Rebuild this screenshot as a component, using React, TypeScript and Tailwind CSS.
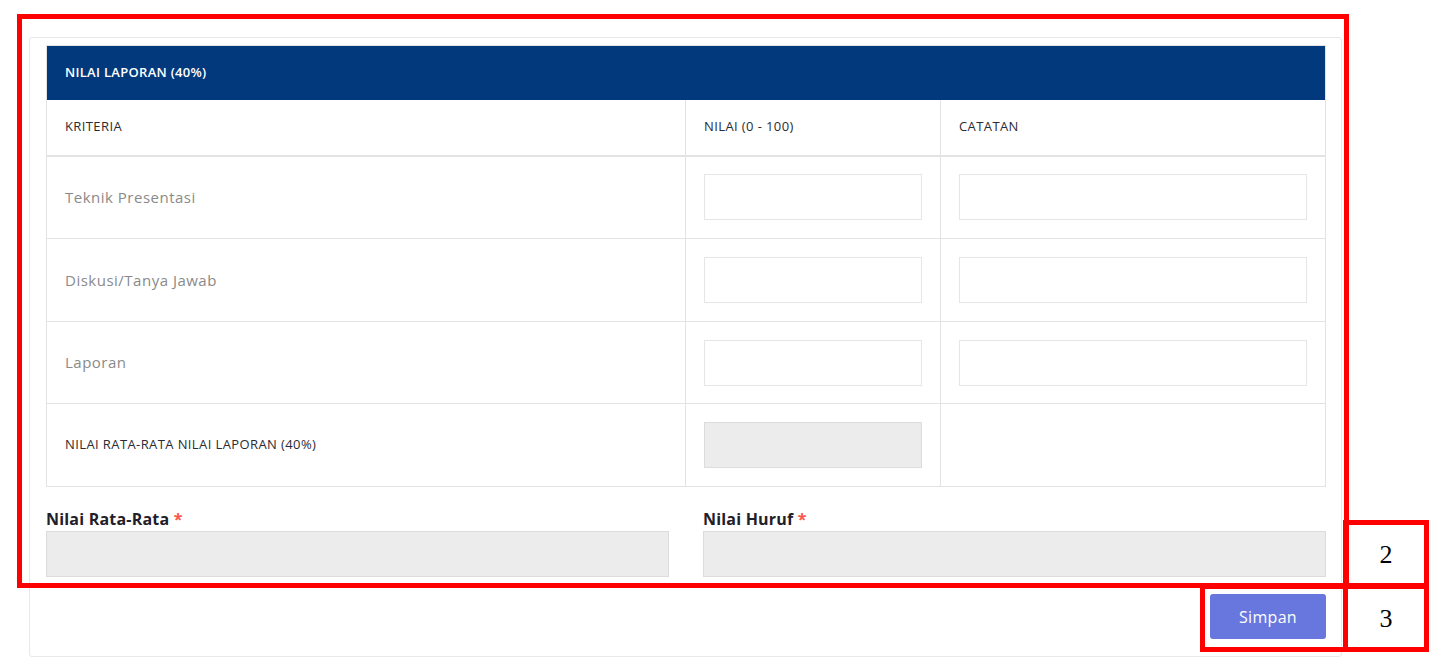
import React from "react";

const font = { fontFamily: '"Open Sans", "Noto Sans", sans-serif' };

function Row({ label, h }: { label: string; h: string }) {
  return (
    <tr className={`${h} border-b border-[#e3e3e3]`}>
      <td className="pl-[18px] text-[15px] tracking-[0.5px] text-[#8a8a8a] border-r border-[#e3e3e3]">{label}</td>
      <td className="px-[18px] border-r border-[#e3e3e3]">
        <div className="h-[46px] border border-[#e6e6e6] bg-white" />
      </td>
      <td className="px-[18px]">
        <div className="h-[46px] border border-[#e6e6e6] bg-white" />
      </td>
    </tr>
  );
}

export default function App() {
  return (
    <div className="relative w-[1442px] h-[668px] bg-white overflow-hidden" style={font}>
      <div className="pl-[29px] pt-[37px]">
        <div className="w-[1313px] h-[620px] border border-[#e8e8e8] rounded-[3px] pl-[16px] pr-[15px] pt-[7px]">
          <table className="w-[1279px] border-collapse border border-[#e3e3e3] table-fixed">
            <colgroup>
              <col className="w-[639px]" />
              <col className="w-[255px]" />
              <col className="w-[385px]" />
            </colgroup>
            <thead>
              <tr className="h-[54px] bg-[#02397d]">
                <th colSpan={3} className="pl-[18px] text-left text-[13px] tracking-[0.3px] font-semibold text-white">
                  NILAI LAPORAN (40%)
                </th>
              </tr>
              <tr className="h-[56px] border-b-2 border-[#e3e3e3]">
                <th className="pl-[18px] text-left text-[13px] tracking-[0.4px] font-medium text-[#2b2b33] border-r border-[#e3e3e3]">KRITERIA</th>
                <th className="pl-[18px] text-left text-[13px] tracking-[0.4px] font-medium text-[#2b2b33] border-r border-[#e3e3e3]">NILAI (0 - 100)</th>
                <th className="pl-[18px] text-left text-[13px] tracking-[0.4px] font-medium text-[#2b2b33]">CATATAN</th>
              </tr>
            </thead>
            <tbody>
              <Row label="Teknik Presentasi" h="h-[83px]" />
              <Row label="Diskusi/Tanya Jawab" h="h-[83px]" />
              <Row label="Laporan" h="h-[82px]" />
              <tr className="h-[83px]">
                <td className="pl-[18px] text-[13px] tracking-[0.4px] font-medium text-[#2b2b33] border-r border-[#e3e3e3]">
                  NILAI RATA-RATA NILAI LAPORAN (40%)
                </td>
                <td className="px-[18px] border-r border-[#e3e3e3]">
                  <div className="h-[46px] border border-[#dcdcdc] bg-[#ececec]" />
                </td>
                <td />
              </tr>
            </tbody>
          </table>
          <div className="mt-[22px] flex gap-[34px]">
            <div className="flex-1">
              <div className="text-[16px] tracking-[0.2px] font-bold text-[#1f2029] leading-[20px]">
                Nilai Rata-Rata <span className="text-[#fc544b]">*</span>
              </div>
              <div className="mt-[2px] h-[46px] border border-[#dcdcdc] bg-[#ececec]" />
            </div>
            <div className="flex-1">
              <div className="text-[16px] tracking-[0.2px] font-bold text-[#1f2029] leading-[20px]">
                Nilai Huruf <span className="text-[#fc544b]">*</span>
              </div>
              <div className="mt-[2px] h-[46px] border border-[#dcdcdc] bg-[#ececec]" />
            </div>
          </div>
          <div className="mt-[17px] flex justify-end">
            <button className="w-[116px] h-[45px] rounded-[3px] bg-[#6777de] text-white text-[16px] tracking-[0.3px]">Simpan</button>
          </div>
        </div>
      </div>

      {/* annotation overlays */}
      <div className="absolute left-[17px] top-[14px] w-[1332px] h-[574px] border-[5px] border-[#ff0000]" />
      <div className="absolute left-[1343px] top-[520px] w-[86px] h-[68px] border-[5px] border-[#ff0000] flex items-center justify-center text-[26px] text-black" style={{ fontFamily: '"Liberation Serif", serif' }}>2</div>
      <div className="absolute left-[1200px] top-[584px] w-[148px] h-[68px] border-[5px] border-[#ff0000]" />
      <div className="absolute left-[1343px] top-[584px] w-[86px] h-[68px] border-[5px] border-[#ff0000] flex items-center justify-center text-[26px] text-black" style={{ fontFamily: '"Liberation Serif", serif' }}>3</div>
    </div>
  );
}
